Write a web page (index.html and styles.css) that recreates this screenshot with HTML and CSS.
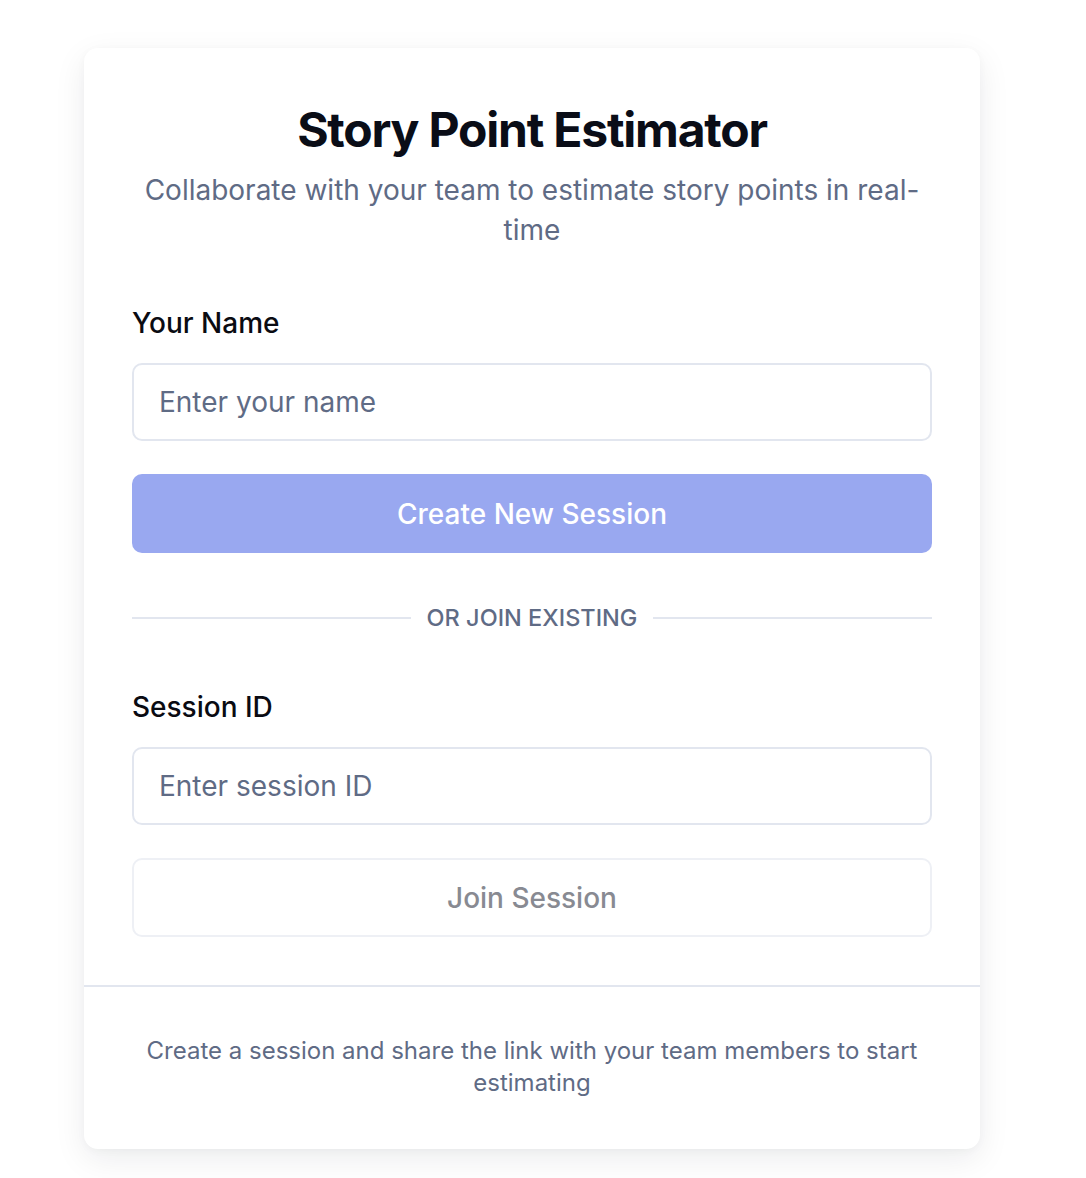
FILE: index.html
```html
<!DOCTYPE html>
<html lang="en">
<head>
<meta charset="utf-8">
<title>Story Point Estimator</title>
<link rel="stylesheet" href="styles.css">
</head>
<body>
<main class="page">
  <section class="card">
    <div class="card-body">
      <header class="header">
        <h1 class="title">Story Point Estimator</h1>
        <p class="subtitle">Collaborate with your team to estimate story points in real-time</p>
      </header>

      <div class="field">
        <label class="label" for="name">Your Name</label>
        <input class="input" id="name" type="text" placeholder="Enter your name">
      </div>

      <button class="btn btn-primary" type="button" disabled>Create New Session</button>

      <div class="divider">
        <span class="divider-line"></span>
        <span class="divider-text">OR JOIN EXISTING</span>
        <span class="divider-line"></span>
      </div>

      <div class="field">
        <label class="label" for="session">Session ID</label>
        <input class="input" id="session" type="text" placeholder="Enter session ID">
      </div>

      <button class="btn btn-outline" type="button" disabled>Join Session</button>
    </div>
    <footer class="card-footer">
      <p class="footer-text">Create a session and share the link with your team members to start estimating</p>
    </footer>
  </section>
</main>
</body>
</html>
```

FILE: styles.css
```css
* {
  box-sizing: border-box;
}

html, body {
  margin: 0;
  padding: 0;
  background: #ffffff;
}

body {
  font-family: Inter, "Noto Sans", "Liberation Sans", sans-serif;
  color: #0a0b12;
}

.page {
  display: flex;
  justify-content: flex-start;
  padding: 48px 106px 30px 84px;
}

.card {
  width: 896px;
  background: #ffffff;
  border-radius: 14px;
  box-shadow: 0 10px 32px rgba(15, 23, 42, 0.08), 0 2px 8px rgba(15, 23, 42, 0.03);
  overflow: hidden;
}

.card-body {
  padding: 48px 48px 48px;
  display: flex;
  flex-direction: column;
}

.header {
  text-align: center;
  margin-bottom: 57px;
}

.title {
  margin: 0;
  font-size: 48px;
  line-height: 68px;
  font-weight: 700;
  letter-spacing: -0.025em;
  color: #0a0d17;
}

.subtitle {
  margin: 6px 0 0;
  font-size: 28px;
  line-height: 40px;
  color: #5f6b85;
  padding: 0 8px;
}

.field {
  display: flex;
  flex-direction: column;
}

.label {
  font-size: 28px;
  line-height: 32px;
  font-weight: 500;
  color: #0a0b12;
  margin-bottom: 24px;
}

.input {
  height: 78px;
  border: 2px solid #e2e6ef;
  border-radius: 10px;
  padding: 0 25px;
  font-family: inherit;
  font-size: 28px;
  color: #0a0b12;
  background: #ffffff;
  outline: none;
}

.input::placeholder {
  color: #5f6b85;
}

.btn {
  height: 79px;
  border-radius: 10px;
  font-family: inherit;
  font-size: 28px;
  font-weight: 500;
  margin-top: 33px;
  cursor: default;
}

.btn-primary {
  background: #99a8f0;
  color: #ffffff;
  border: none;
}

.btn-outline {
  background: #ffffff;
  color: #888a92;
  border: 2px solid #eef0f5;
}

.divider {
  display: flex;
  align-items: center;
  gap: 16px;
  margin: 49px 0 57px;
}

.divider-line {
  flex: 1;
  height: 2px;
  background: #e2e6ef;
}

.divider-text {
  font-size: 23.5px;
  line-height: 32px;
  font-weight: 500;
  color: #5f6b85;
}

.card-footer {
  border-top: 2px solid #e2e6ef;
  padding: 48px 48px 50px;
}

.footer-text {
  margin: 0;
  text-align: center;
  font-size: 24px;
  line-height: 32px;
  color: #5f6b85;
}
```
